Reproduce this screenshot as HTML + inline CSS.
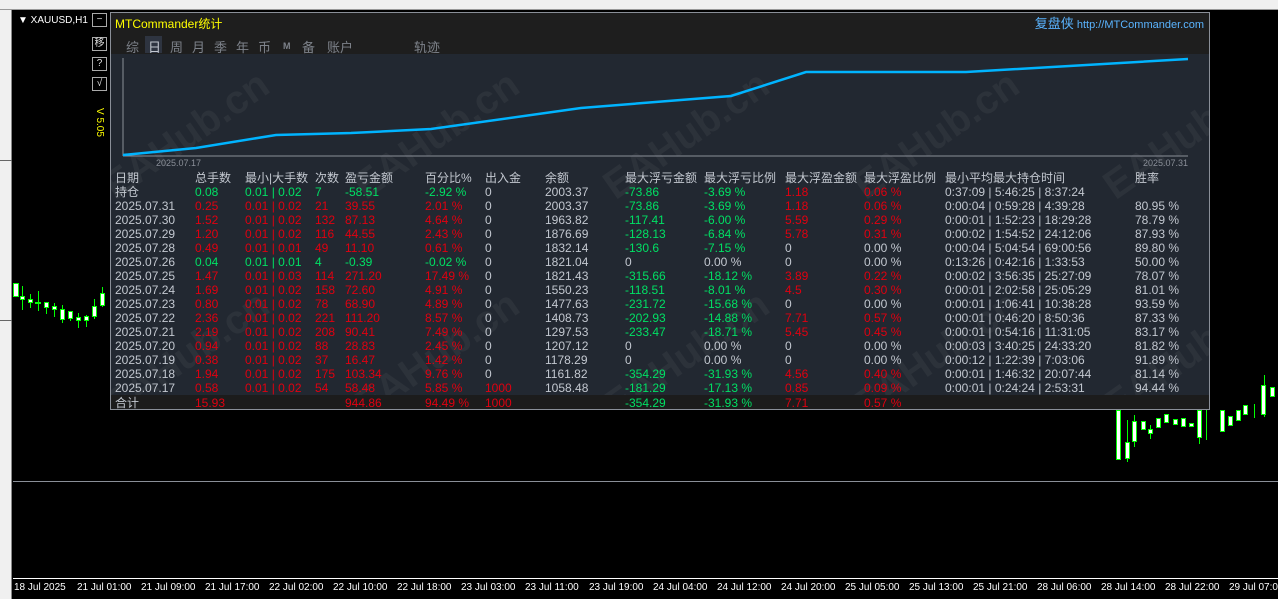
<!DOCTYPE html>
<html><head><meta charset="utf-8">
<style>
*{margin:0;padding:0;box-sizing:border-box}
body{width:1278px;height:599px;overflow:hidden;background:#000;position:relative;font-family:"Liberation Sans","Noto Sans CJK SC",sans-serif;font-size:12px}
.abs{position:absolute}
#top{left:0;top:0;width:1278px;height:10px;background:#f0f0f0;border-bottom:1px solid #999}
#lstrip{left:0;top:10px;width:12px;height:589px;background:#f0f0f0;border-right:1px solid #888}
#panel{left:110px;top:12px;width:1100px;height:398px;background:#222831;border:1px solid #8a8f98;overflow:hidden}
#hdr{left:0;top:0;width:1098px;height:41px;background:#1e1e1e}
.t{position:absolute;white-space:nowrap;line-height:14px}
.w{color:#c3c8d0}.g{color:#00e064}.r{color:#e00010}.h{color:#c3c8d0;font-size:12px}
.tab{position:absolute;top:24px;color:#7d828a;font-size:13px}
.btn{position:absolute;left:92px;width:15px;height:14px;border:1px solid #aaa;color:#ddd;font-size:10px;text-align:center;line-height:12px}
.wm{position:absolute;color:rgba(160,160,160,0.09);font-size:40px;font-weight:bold;transform:rotate(-35deg);white-space:nowrap}
.ax{position:absolute;top:582px;color:#fff;font-size:10px;white-space:nowrap}
.cw{position:absolute;background:#fff;border:1px solid #0f0}
.ck{position:absolute;width:1px;background:#0f0}
</style></head><body>
<div id="top" class="abs"></div>
<div id="lstrip" class="abs"></div>
<div class="abs" style="left:0;top:160px;width:12px;height:1px;background:#666"></div>
<div class="abs" style="left:0;top:320px;width:12px;height:1px;background:#666"></div>
<div class="abs" style="left:13px;top:481px;width:1265px;height:1px;background:#8a8f98"></div>
<div class="abs" style="left:13px;top:578px;width:1265px;height:1px;background:#fff"></div>
<div class="t" style="left:18px;top:14px;color:#fff;font-size:10px">▼ XAUUSD,H1</div>
<div class="btn" style="top:13px">−</div>
<div class="btn" style="top:37px">移</div>
<div class="btn" style="top:57px">?</div>
<div class="btn" style="top:77px">√</div>
<div class="t" style="top:108px;color:#ff0;font-size:10px;transform:rotate(90deg);transform-origin:0 0;left:106px">V 5.05</div>

<div class="cw" style="left:13px;top:283px;width:6px;height:14px"></div>
<div class="ck" style="left:22px;top:286px;height:24px"></div><div class="cw" style="left:20px;top:296px;width:5px;height:4px"></div>
<div class="ck" style="left:30px;top:294px;height:14px"></div><div class="cw" style="left:28px;top:299px;width:5px;height:4px"></div>
<div class="ck" style="left:38px;top:291px;height:20px"></div><div class="cw" style="left:35px;top:302px;width:6px;height:2px"></div>
<div class="ck" style="left:46px;top:302px;height:12px"></div><div class="cw" style="left:44px;top:302px;width:5px;height:6px"></div>
<div class="ck" style="left:54px;top:303px;height:14px"></div><div class="cw" style="left:52px;top:306px;width:5px;height:4px"></div>
<div class="ck" style="left:62px;top:305px;height:18px"></div><div class="cw" style="left:60px;top:309px;width:5px;height:11px"></div>
<div class="ck" style="left:70px;top:311px;height:10px"></div><div class="cw" style="left:68px;top:311px;width:5px;height:8px"></div>
<div class="ck" style="left:78px;top:313px;height:15px"></div><div class="cw" style="left:76px;top:317px;width:5px;height:4px"></div>
<div class="ck" style="left:86px;top:315px;height:12px"></div><div class="cw" style="left:84px;top:316px;width:5px;height:5px"></div>
<div class="ck" style="left:94px;top:299px;height:20px"></div><div class="cw" style="left:92px;top:306px;width:5px;height:11px"></div>
<div class="ck" style="left:102px;top:287px;height:20px"></div><div class="cw" style="left:100px;top:293px;width:5px;height:13px"></div>

<div class="cw" style="left:1116px;top:410px;width:5px;height:50px"></div>
<div class="ck" style="left:1127px;top:420px;height:42px"></div><div class="cw" style="left:1125px;top:442px;width:5px;height:17px"></div>
<div class="ck" style="left:1134px;top:415px;height:32px"></div><div class="cw" style="left:1132px;top:421px;width:5px;height:21px"></div>
<div class="cw" style="left:1141px;top:421px;width:5px;height:9px"></div>
<div class="ck" style="left:1150px;top:425px;height:14px"></div><div class="cw" style="left:1148px;top:429px;width:5px;height:5px"></div>
<div class="cw" style="left:1156px;top:418px;width:5px;height:10px"></div>
<div class="cw" style="left:1164px;top:414px;width:5px;height:9px"></div>
<div class="cw" style="left:1173px;top:419px;width:5px;height:6px"></div>
<div class="cw" style="left:1181px;top:418px;width:5px;height:9px"></div>
<div class="cw" style="left:1189px;top:423px;width:5px;height:4px"></div>
<div class="ck" style="left:1199px;top:404px;height:40px"></div><div class="cw" style="left:1197px;top:410px;width:5px;height:28px"></div>
<div class="ck" style="left:1206px;top:410px;height:30px"></div>
<div class="cw" style="left:1220px;top:410px;width:5px;height:22px"></div>
<div class="cw" style="left:1228px;top:416px;width:5px;height:10px"></div>
<div class="cw" style="left:1236px;top:410px;width:5px;height:11px"></div>
<div class="cw" style="left:1243px;top:405px;width:5px;height:10px"></div>
<div class="ck" style="left:1254px;top:404px;height:14px"></div>
<div class="ck" style="left:1264px;top:375px;height:42px"></div><div class="cw" style="left:1261px;top:385px;width:5px;height:30px"></div>
<div class="cw" style="left:1270px;top:387px;width:5px;height:10px"></div>

<div id="panel" class="abs">
<div id="hdr" class="abs"></div>
<div class="t" style="left:4px;top:4px;color:#ff0;font-size:12px">MTCommander统计</div>
<div class="t" style="right:5px;top:4px;color:#5ab4ff;font-size:11px"><span style="font-size:13px">复盘侠</span> http://MTCommander.com</div>
<div class="abs" style="left:34px;top:23px;width:17px;height:17px;background:#2e3440"></div>
<div class="tab" style="left:15px">综</div><div class="tab" style="left:37px;color:#c3c8d0">日</div><div class="tab" style="left:59px">周</div><div class="tab" style="left:81px">月</div><div class="tab" style="left:103px">季</div><div class="tab" style="left:125px">年</div><div class="tab" style="left:147px">币</div><div class="tab" style="left:172px;font-size:9px;top:28px;font-weight:bold">M</div><div class="tab" style="left:191px">备</div><div class="tab" style="left:216px">账户</div><div class="tab" style="left:303px">轨迹</div>
<div class="wm" style="left:-20px;top:100px">EAHub.cn</div>
<div class="wm" style="left:230px;top:100px">EAHub.cn</div>
<div class="wm" style="left:480px;top:100px">EAHub.cn</div>
<div class="wm" style="left:730px;top:100px">EAHub.cn</div>
<div class="wm" style="left:980px;top:100px">EAHub.cn</div>
<div class="wm" style="left:-20px;top:320px">EAHub.cn</div>
<div class="wm" style="left:230px;top:320px">EAHub.cn</div>
<div class="wm" style="left:480px;top:320px">EAHub.cn</div>
<div class="wm" style="left:730px;top:320px">EAHub.cn</div>
<div class="wm" style="left:980px;top:320px">EAHub.cn</div>
<svg class="abs" style="left:0;top:0" width="1100" height="170">
<line x1="12" y1="45" x2="12" y2="143" stroke="#8a8f98"/>
<line x1="12" y1="143" x2="1077" y2="143" stroke="#8a8f98"/>
<polyline fill="none" stroke="#00b4ff" stroke-width="2.5" points="12,142 85,135 165,122 240,120 320,116 470,95 620,83 695,59 855,59 1077,46"/>
</svg>
<div class="t" style="left:45px;top:143px;color:#8a8f98;font-size:9px">2025.07.17</div>
<div class="t" style="left:1032px;top:143px;color:#8a8f98;font-size:9px">2025.07.31</div>
<div class="abs" style="left:0;top:382px;width:1098px;height:15px;background:#1c1c1c"></div>
</div>

<div class="ax" style="left:14px">18 Jul 2025</div><div class="ax" style="left:77px">21 Jul 01:00</div><div class="ax" style="left:141px">21 Jul 09:00</div><div class="ax" style="left:205px">21 Jul 17:00</div><div class="ax" style="left:269px">22 Jul 02:00</div><div class="ax" style="left:333px">22 Jul 10:00</div><div class="ax" style="left:397px">22 Jul 18:00</div><div class="ax" style="left:461px">23 Jul 03:00</div><div class="ax" style="left:525px">23 Jul 11:00</div><div class="ax" style="left:589px">23 Jul 19:00</div><div class="ax" style="left:653px">24 Jul 04:00</div><div class="ax" style="left:717px">24 Jul 12:00</div><div class="ax" style="left:781px">24 Jul 20:00</div><div class="ax" style="left:845px">25 Jul 05:00</div><div class="ax" style="left:909px">25 Jul 13:00</div><div class="ax" style="left:973px">25 Jul 21:00</div><div class="ax" style="left:1037px">28 Jul 06:00</div><div class="ax" style="left:1101px">28 Jul 14:00</div><div class="ax" style="left:1165px">28 Jul 22:00</div><div class="ax" style="left:1229px">29 Jul 07:00</div>

<div style="position:absolute;left:110px;top:12px;font-size:12px">
<div class="t h" style="left:5px;top:159px">日期</div><div class="t h" style="left:85px;top:159px">总手数</div><div class="t h" style="left:135px;top:159px">最小|大手数</div><div class="t h" style="left:205px;top:159px">次数</div><div class="t h" style="left:235px;top:159px">盈亏金额</div><div class="t h" style="left:315px;top:159px">百分比%</div><div class="t h" style="left:375px;top:159px">出入金</div><div class="t h" style="left:435px;top:159px">余额</div><div class="t h" style="left:515px;top:159px">最大浮亏金额</div><div class="t h" style="left:594px;top:159px">最大浮亏比例</div><div class="t h" style="left:675px;top:159px">最大浮盈金额</div><div class="t h" style="left:754px;top:159px">最大浮盈比例</div><div class="t h" style="left:835px;top:159px">最小平均最大持仓时间</div><div class="t h" style="left:1025px;top:159px">胜率</div>

<div class="t h" style="left:5px;top:173px">持仓</div><div class="t g" style="left:85px;top:173px">0.08</div><div class="t g" style="left:135px;top:173px">0.01 | 0.02</div><div class="t g" style="left:205px;top:173px">7</div><div class="t g" style="left:235px;top:173px">-58.51</div><div class="t g" style="left:315px;top:173px">-2.92 %</div><div class="t w" style="left:375px;top:173px">0</div><div class="t w" style="left:435px;top:173px">2003.37</div><div class="t g" style="left:515px;top:173px">-73.86</div><div class="t g" style="left:594px;top:173px">-3.69 %</div><div class="t r" style="left:675px;top:173px">1.18</div><div class="t r" style="left:754px;top:173px">0.06 %</div><div class="t w" style="left:835px;top:173px">0:37:09 | 5:46:25 | 8:37:24</div>

<div class="t w" style="left:5px;top:187px">2025.07.31</div><div class="t r" style="left:85px;top:187px">0.25</div><div class="t r" style="left:135px;top:187px">0.01 | 0.02</div><div class="t r" style="left:205px;top:187px">21</div><div class="t r" style="left:235px;top:187px">39.55</div><div class="t r" style="left:315px;top:187px">2.01 %</div><div class="t w" style="left:375px;top:187px">0</div><div class="t w" style="left:435px;top:187px">2003.37</div><div class="t g" style="left:515px;top:187px">-73.86</div><div class="t g" style="left:594px;top:187px">-3.69 %</div><div class="t r" style="left:675px;top:187px">1.18</div><div class="t r" style="left:754px;top:187px">0.06 %</div><div class="t w" style="left:835px;top:187px">0:00:04 | 0:59:28 | 4:39:28</div><div class="t w" style="left:1025px;top:187px">80.95 %</div>

<div class="t w" style="left:5px;top:201px">2025.07.30</div><div class="t r" style="left:85px;top:201px">1.52</div><div class="t r" style="left:135px;top:201px">0.01 | 0.02</div><div class="t r" style="left:205px;top:201px">132</div><div class="t r" style="left:235px;top:201px">87.13</div><div class="t r" style="left:315px;top:201px">4.64 %</div><div class="t w" style="left:375px;top:201px">0</div><div class="t w" style="left:435px;top:201px">1963.82</div><div class="t g" style="left:515px;top:201px">-117.41</div><div class="t g" style="left:594px;top:201px">-6.00 %</div><div class="t r" style="left:675px;top:201px">5.59</div><div class="t r" style="left:754px;top:201px">0.29 %</div><div class="t w" style="left:835px;top:201px">0:00:01 | 1:52:23 | 18:29:28</div><div class="t w" style="left:1025px;top:201px">78.79 %</div>

<div class="t w" style="left:5px;top:215px">2025.07.29</div><div class="t r" style="left:85px;top:215px">1.20</div><div class="t r" style="left:135px;top:215px">0.01 | 0.02</div><div class="t r" style="left:205px;top:215px">116</div><div class="t r" style="left:235px;top:215px">44.55</div><div class="t r" style="left:315px;top:215px">2.43 %</div><div class="t w" style="left:375px;top:215px">0</div><div class="t w" style="left:435px;top:215px">1876.69</div><div class="t g" style="left:515px;top:215px">-128.13</div><div class="t g" style="left:594px;top:215px">-6.84 %</div><div class="t r" style="left:675px;top:215px">5.78</div><div class="t r" style="left:754px;top:215px">0.31 %</div><div class="t w" style="left:835px;top:215px">0:00:02 | 1:54:52 | 24:12:06</div><div class="t w" style="left:1025px;top:215px">87.93 %</div>

<div class="t w" style="left:5px;top:229px">2025.07.28</div><div class="t r" style="left:85px;top:229px">0.49</div><div class="t r" style="left:135px;top:229px">0.01 | 0.01</div><div class="t r" style="left:205px;top:229px">49</div><div class="t r" style="left:235px;top:229px">11.10</div><div class="t r" style="left:315px;top:229px">0.61 %</div><div class="t w" style="left:375px;top:229px">0</div><div class="t w" style="left:435px;top:229px">1832.14</div><div class="t g" style="left:515px;top:229px">-130.6</div><div class="t g" style="left:594px;top:229px">-7.15 %</div><div class="t w" style="left:675px;top:229px">0</div><div class="t w" style="left:754px;top:229px">0.00 %</div><div class="t w" style="left:835px;top:229px">0:00:04 | 5:04:54 | 69:00:56</div><div class="t w" style="left:1025px;top:229px">89.80 %</div>

<div class="t w" style="left:5px;top:243px">2025.07.26</div><div class="t g" style="left:85px;top:243px">0.04</div><div class="t g" style="left:135px;top:243px">0.01 | 0.01</div><div class="t g" style="left:205px;top:243px">4</div><div class="t g" style="left:235px;top:243px">-0.39</div><div class="t g" style="left:315px;top:243px">-0.02 %</div><div class="t w" style="left:375px;top:243px">0</div><div class="t w" style="left:435px;top:243px">1821.04</div><div class="t w" style="left:515px;top:243px">0</div><div class="t w" style="left:594px;top:243px">0.00 %</div><div class="t w" style="left:675px;top:243px">0</div><div class="t w" style="left:754px;top:243px">0.00 %</div><div class="t w" style="left:835px;top:243px">0:13:26 | 0:42:16 | 1:33:53</div><div class="t w" style="left:1025px;top:243px">50.00 %</div>

<div class="t w" style="left:5px;top:257px">2025.07.25</div><div class="t r" style="left:85px;top:257px">1.47</div><div class="t r" style="left:135px;top:257px">0.01 | 0.03</div><div class="t r" style="left:205px;top:257px">114</div><div class="t r" style="left:235px;top:257px">271.20</div><div class="t r" style="left:315px;top:257px">17.49 %</div><div class="t w" style="left:375px;top:257px">0</div><div class="t w" style="left:435px;top:257px">1821.43</div><div class="t g" style="left:515px;top:257px">-315.66</div><div class="t g" style="left:594px;top:257px">-18.12 %</div><div class="t r" style="left:675px;top:257px">3.89</div><div class="t r" style="left:754px;top:257px">0.22 %</div><div class="t w" style="left:835px;top:257px">0:00:02 | 3:56:35 | 25:27:09</div><div class="t w" style="left:1025px;top:257px">78.07 %</div>

<div class="t w" style="left:5px;top:271px">2025.07.24</div><div class="t r" style="left:85px;top:271px">1.69</div><div class="t r" style="left:135px;top:271px">0.01 | 0.02</div><div class="t r" style="left:205px;top:271px">158</div><div class="t r" style="left:235px;top:271px">72.60</div><div class="t r" style="left:315px;top:271px">4.91 %</div><div class="t w" style="left:375px;top:271px">0</div><div class="t w" style="left:435px;top:271px">1550.23</div><div class="t g" style="left:515px;top:271px">-118.51</div><div class="t g" style="left:594px;top:271px">-8.01 %</div><div class="t r" style="left:675px;top:271px">4.5</div><div class="t r" style="left:754px;top:271px">0.30 %</div><div class="t w" style="left:835px;top:271px">0:00:01 | 2:02:58 | 25:05:29</div><div class="t w" style="left:1025px;top:271px">81.01 %</div>

<div class="t w" style="left:5px;top:285px">2025.07.23</div><div class="t r" style="left:85px;top:285px">0.80</div><div class="t r" style="left:135px;top:285px">0.01 | 0.02</div><div class="t r" style="left:205px;top:285px">78</div><div class="t r" style="left:235px;top:285px">68.90</div><div class="t r" style="left:315px;top:285px">4.89 %</div><div class="t w" style="left:375px;top:285px">0</div><div class="t w" style="left:435px;top:285px">1477.63</div><div class="t g" style="left:515px;top:285px">-231.72</div><div class="t g" style="left:594px;top:285px">-15.68 %</div><div class="t w" style="left:675px;top:285px">0</div><div class="t w" style="left:754px;top:285px">0.00 %</div><div class="t w" style="left:835px;top:285px">0:00:01 | 1:06:41 | 10:38:28</div><div class="t w" style="left:1025px;top:285px">93.59 %</div>

<div class="t w" style="left:5px;top:299px">2025.07.22</div><div class="t r" style="left:85px;top:299px">2.36</div><div class="t r" style="left:135px;top:299px">0.01 | 0.02</div><div class="t r" style="left:205px;top:299px">221</div><div class="t r" style="left:235px;top:299px">111.20</div><div class="t r" style="left:315px;top:299px">8.57 %</div><div class="t w" style="left:375px;top:299px">0</div><div class="t w" style="left:435px;top:299px">1408.73</div><div class="t g" style="left:515px;top:299px">-202.93</div><div class="t g" style="left:594px;top:299px">-14.88 %</div><div class="t r" style="left:675px;top:299px">7.71</div><div class="t r" style="left:754px;top:299px">0.57 %</div><div class="t w" style="left:835px;top:299px">0:00:01 | 0:46:20 | 8:50:36</div><div class="t w" style="left:1025px;top:299px">87.33 %</div>

<div class="t w" style="left:5px;top:313px">2025.07.21</div><div class="t r" style="left:85px;top:313px">2.19</div><div class="t r" style="left:135px;top:313px">0.01 | 0.02</div><div class="t r" style="left:205px;top:313px">208</div><div class="t r" style="left:235px;top:313px">90.41</div><div class="t r" style="left:315px;top:313px">7.49 %</div><div class="t w" style="left:375px;top:313px">0</div><div class="t w" style="left:435px;top:313px">1297.53</div><div class="t g" style="left:515px;top:313px">-233.47</div><div class="t g" style="left:594px;top:313px">-18.71 %</div><div class="t r" style="left:675px;top:313px">5.45</div><div class="t r" style="left:754px;top:313px">0.45 %</div><div class="t w" style="left:835px;top:313px">0:00:01 | 0:54:16 | 11:31:05</div><div class="t w" style="left:1025px;top:313px">83.17 %</div>

<div class="t w" style="left:5px;top:327px">2025.07.20</div><div class="t r" style="left:85px;top:327px">0.94</div><div class="t r" style="left:135px;top:327px">0.01 | 0.02</div><div class="t r" style="left:205px;top:327px">88</div><div class="t r" style="left:235px;top:327px">28.83</div><div class="t r" style="left:315px;top:327px">2.45 %</div><div class="t w" style="left:375px;top:327px">0</div><div class="t w" style="left:435px;top:327px">1207.12</div><div class="t w" style="left:515px;top:327px">0</div><div class="t w" style="left:594px;top:327px">0.00 %</div><div class="t w" style="left:675px;top:327px">0</div><div class="t w" style="left:754px;top:327px">0.00 %</div><div class="t w" style="left:835px;top:327px">0:00:03 | 3:40:25 | 24:33:20</div><div class="t w" style="left:1025px;top:327px">81.82 %</div>

<div class="t w" style="left:5px;top:341px">2025.07.19</div><div class="t r" style="left:85px;top:341px">0.38</div><div class="t r" style="left:135px;top:341px">0.01 | 0.02</div><div class="t r" style="left:205px;top:341px">37</div><div class="t r" style="left:235px;top:341px">16.47</div><div class="t r" style="left:315px;top:341px">1.42 %</div><div class="t w" style="left:375px;top:341px">0</div><div class="t w" style="left:435px;top:341px">1178.29</div><div class="t w" style="left:515px;top:341px">0</div><div class="t w" style="left:594px;top:341px">0.00 %</div><div class="t w" style="left:675px;top:341px">0</div><div class="t w" style="left:754px;top:341px">0.00 %</div><div class="t w" style="left:835px;top:341px">0:00:12 | 1:22:39 | 7:03:06</div><div class="t w" style="left:1025px;top:341px">91.89 %</div>

<div class="t w" style="left:5px;top:355px">2025.07.18</div><div class="t r" style="left:85px;top:355px">1.94</div><div class="t r" style="left:135px;top:355px">0.01 | 0.02</div><div class="t r" style="left:205px;top:355px">175</div><div class="t r" style="left:235px;top:355px">103.34</div><div class="t r" style="left:315px;top:355px">9.76 %</div><div class="t w" style="left:375px;top:355px">0</div><div class="t w" style="left:435px;top:355px">1161.82</div><div class="t g" style="left:515px;top:355px">-354.29</div><div class="t g" style="left:594px;top:355px">-31.93 %</div><div class="t r" style="left:675px;top:355px">4.56</div><div class="t r" style="left:754px;top:355px">0.40 %</div><div class="t w" style="left:835px;top:355px">0:00:01 | 1:46:32 | 20:07:44</div><div class="t w" style="left:1025px;top:355px">81.14 %</div>

<div class="t w" style="left:5px;top:369px">2025.07.17</div><div class="t r" style="left:85px;top:369px">0.58</div><div class="t r" style="left:135px;top:369px">0.01 | 0.02</div><div class="t r" style="left:205px;top:369px">54</div><div class="t r" style="left:235px;top:369px">58.48</div><div class="t r" style="left:315px;top:369px">5.85 %</div><div class="t r" style="left:375px;top:369px">1000</div><div class="t w" style="left:435px;top:369px">1058.48</div><div class="t g" style="left:515px;top:369px">-181.29</div><div class="t g" style="left:594px;top:369px">-17.13 %</div><div class="t r" style="left:675px;top:369px">0.85</div><div class="t r" style="left:754px;top:369px">0.09 %</div><div class="t w" style="left:835px;top:369px">0:00:01 | 0:24:24 | 2:53:31</div><div class="t w" style="left:1025px;top:369px">94.44 %</div>

<div class="t h" style="left:5px;top:384px">合计</div><div class="t r" style="left:85px;top:384px">15.93</div><div class="t r" style="left:235px;top:384px">944.86</div><div class="t r" style="left:315px;top:384px">94.49 %</div><div class="t r" style="left:375px;top:384px">1000</div><div class="t g" style="left:515px;top:384px">-354.29</div><div class="t g" style="left:594px;top:384px">-31.93 %</div><div class="t r" style="left:675px;top:384px">7.71</div><div class="t r" style="left:754px;top:384px">0.57 %</div>
</div>
</body></html>
